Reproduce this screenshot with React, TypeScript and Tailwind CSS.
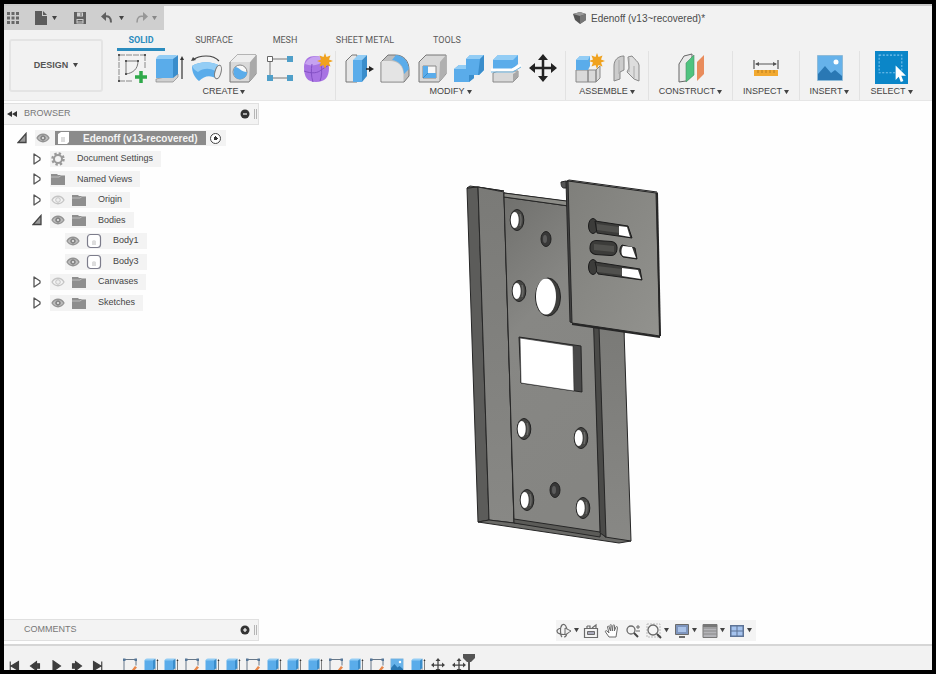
import type { ReactNode } from "react";

const BLUE = "#5aacea";
const PALE = "#93cdf5";
const DEEP = "#3a8dcb";
const LIGHT = "#d9d9d9";
const LINE = "#6b6b6b";

function Svg({ box = "0 0 32 32", className = "size-8", children }: { box?: string; className?: string; children: ReactNode }) {
  return (
    <svg viewBox={box} className={`shrink-0 ${className}`} fill="none" aria-hidden="true">
      {children}
    </svg>
  );
}

function Caret({ className = "w-[5px]" }: { className?: string }) {
  return (
    <svg viewBox="0 0 6 5" className={`shrink-0 ${className}`} aria-hidden="true">
      <path d="M0 0h6L3 5z" fill="#444" />
    </svg>
  );
}

/* ---------- ribbon icons ---------- */

const SketchIcon = ({ className }: { className?: string }) => (
  <Svg className={className}>
    <path d="M3 3h26M3 3v26M29 3v14M3 29h14" stroke="#888" strokeDasharray="6 1" />
    <path d="M10 9h12c0 8-5 12-12 13z" stroke="#777" />
    <path d="M2 2h2v2H2zM28 2h2v2h-2zM2 28h2v2H2zM9 8h2v2H9zM21 8h2v2h-2zM9 21h2v2H9z" fill="#555" />
    <path d="M19 25h12M25 19v12" stroke="#2fa94a" strokeWidth="3.500" />
  </Svg>
);

const ExtrudeIcon = ({ className }: { className?: string }) => (
  <Svg className={className}>
    <path d="M3 27v3h17l5-5v-3z" fill="#d0d0d0" stroke="#888" strokeWidth=".7" />
    <path d="M3 8c0-3 2-5 5-5h16l-4 5z" fill={PALE} />
    <path d="M3 7h17v19H3z" fill={BLUE} />
    <path d="M20 7l5-4v19l-5 4z" fill={DEEP} />
    <path d="M29 7v20" stroke="#333" strokeWidth="1.200" />
    <path d="M27 8l2-4 2 4z" fill="#333" />
  </Svg>
);

const RevolveIcon = () => (
  <Svg>
    <path d="M3 8C9 3 23 2 29 9" stroke="#444" strokeWidth="1.200" />
    <path d="M1 9l2-4 3 3z" fill="#444" />
    <path d="M2 14c8-5 20-5 28 0l-3 13c-6-4-12-4-18 2-5-4-7-9-7-15z" fill={BLUE} />
    <path d="M2 14c8-5 20-5 28 0l-5 5c-5-3-12-3-17 1-2-1-5-3-6-6z" fill={PALE} />
    <ellipse cx="28" cy="20" rx="3" ry="7" transform="rotate(15 28 20)" fill="#eee" stroke="#777" />
  </Svg>
);

const HoleIcon = () => (
  <Svg>
    <path d="M3 10l7-7h19v19l-7 8H3z" fill={LIGHT} stroke="#777" />
    <path d="M23 10l6-7v19l-7 8z" fill="#a9a9a9" />
    <path d="M3 10l7-7h19l-6 7z" fill="#eee" />
    <circle cx="13" cy="20" r="7" fill="#f8f8f8" stroke="#888" />
    <path d="M8 15c4 0 6 5 12 5a7 7 0 0 1-12 5c-2-3-2-7 0-10z" fill={BLUE} />
  </Svg>
);

const PatternIcon = () => (
  <Svg>
    <path d="M6 7h20M6 7v19M6 26h20" stroke="#777" />
    <path d="M3.500 4.500h5v5h-5z" fill="#fff" stroke="#666" />
    <path d="M23 4h6v6h-6zM3 23h6v6H3zM23 23h6v6h-6z" fill="#4f9fc9" />
  </Svg>
);

const FormIcon = () => (
  <Svg>
    <path d="M3 15c0-8 5-11 11-11 9 0 14 4 14 12 0 9-4 14-13 14C6 30 3 25 3 15z" fill="#a873e3" />
    <path d="M4 12c3-8 15-10 20-4-5 5-13 7-20 4z" fill="#c6a2f0" />
    <path d="M3 19c8 3 14 2 17-1l8-5M11 12c-1 6-1 12 1 18M20 12c1 6 1 12-1 17" stroke="#8350c4" />
    <Spark />
  </Svg>
);

const PressPullIcon = () => (
  <Svg>
    <path d="M4 9l6-6h5v27H4z" fill="#e6e6e6" stroke="#777" />
    <path d="M11 8l5-5h9l-5 5z" fill={PALE} />
    <path d="M11 8h9v22h-9z" fill={BLUE} />
    <path d="M20 8l5-5v21l-5 6z" fill={DEEP} />
    <path d="M24 17h5" stroke="#222" strokeWidth="1.500" />
    <path d="M27 14l5 3-5 3z" fill="#222" />
  </Svg>
);

const FilletIcon = () => (
  <Svg>
    <path d="M2 10l7-7h7c9 0 14 6 14 15v6l-5 6H2z" fill="#bdbdbd" stroke="#777" />
    <path d="M11 9H2.500v20.500h22V22C24 14 19 9 11 9z" fill="#e4e4e4" />
    <path d="M13 8l4-5c8 1 12 6 13 14l-5 5c0-8-5-13-12-14z" fill={BLUE} />
  </Svg>
);

const ShellIcon = () => (
  <Svg>
    <path d="M3 10l7-7h20v19l-7 8H3z" fill={LIGHT} stroke="#777" />
    <path d="M24 10l6-7v19l-7 8z" fill="#b0b0b0" />
    <path d="M7 14h13v12H7z" fill="#f7f7f7" stroke="#888" />
    <path d="M7 14h5v7h8v5H7z" fill={BLUE} />
    <path d="M7 26l5-5" stroke={DEEP} />
  </Svg>
);

const CombineIcon = () => (
  <Svg>
    <path d="M1 17l5-4h7V7l4-4h14v15l-5 5h-5v3l-5 4H1z" fill={BLUE} />
    <path d="M13 7l4-4h14l-4 4zM1 17l5-4h7v4z" fill={PALE} />
    <path d="M27 7l4-4v15l-5 5h-1zM21 23v3l-5 4v-7z" fill={DEEP} />
  </Svg>
);

const SplitIcon = () => (
  <Svg>
    <path d="M3 8l5-5h20v9l-5 5H3z" fill={BLUE} />
    <path d="M3 8l5-5h20l-5 5z" fill={PALE} />
    <path d="M3 21l5-2h20v6l-5 5H3z" fill={LIGHT} stroke="#888" />
    <path d="M23 22l5-3v6l-5 5z" fill="#a8a8a8" />
    <path d="M1 18h21l9-5" stroke="#fff" strokeWidth="3" />
    <path d="M1 20h22l8-5" stroke="#6fb6e2" />
  </Svg>
);

const MoveIcon = ({ className, color = "#222" }: { className?: string; color?: string }) => (
  <Svg className={className}>
    <path d="M16 6v20M6 16h20" stroke={color} strokeWidth="2.500" />
    <path d="M16 2l5 6H11zM16 30l5-6H11zM2 16l6-5v10zM30 16l-6-5v10z" fill={color} />
  </Svg>
);

function Spark() {
  return (
    <path d="M24 1l1.500 4 4-1.500L28 7.500l4 1.500-4 1.500 1.500 4-4-1.500L24 17l-1.500-4-4 1.500 1.500-4-4-1.500 4-1.500-1.500-4 4 1.500z" fill="#f0a21e" />
  );
}

const ComponentIcon = () => (
  <Svg>
    <path d="M3 18h12v12H3zM15 18h8v12h-8zM23 18l4-4v12l-4 4z" fill={LIGHT} stroke="#888" />
    <path d="M3 8l4-4h10v10l-2 4H3z" fill={BLUE} />
    <path d="M3 8l4-4h10l-2 4z" fill={PALE} />
    <Spark />
  </Svg>
);

const JointIcon = () => (
  <Svg>
    <path d="M4 14c0-6 4-10 10-10v14l-4 2v7l-6 2z" fill="#ccc" stroke="#888" />
    <path d="M9 8v14" stroke="#aaa" />
    <path d="M18 5l4-1c3 4 6 5 7 9v16l-5-2-7-7 2-4z" fill="#ddd" stroke="#888" />
    <path d="M19 6v14M24 14v12" stroke="#aaa" />
  </Svg>
);

const PlaneIcon = () => (
  <Svg>
    <path d="M4 12l5-8 8-2v22l-6 5-7 1z" fill="#eaeaea" stroke="#666" />
    <path d="M11 11l8-8v20l-8 7z" fill="#4fc37f" stroke="#4a8f66" strokeWidth=".6" />
    <path d="M22 10l7-7v19l-7 7z" fill="#e98c5c" />
  </Svg>
);

const MeasureIcon = () => (
  <Svg>
    <path d="M4 8v9M28 8v9M6 12h20" stroke="#555" strokeWidth="1.200" />
    <path d="M5 12l4-2v4zM27 12l-4-2v4z" fill="#555" />
    <path d="M4 18h24v6H4z" fill="#f2a930" />
    <path d="M8 18v3M12 18v3M16 18v3M20 18v3M24 18v3" stroke="#b87d1c" />
  </Svg>
);

const PictureIcon = ({ className }: { className?: string }) => (
  <Svg className={className}>
    <path d="M3.500 3.500h25v25h-25z" fill="#66b2ea" stroke="#8fbbd8" />
    <circle cx="22" cy="10" r="2.500" fill="#fff" />
    <path d="M4 22l7-8 6 7 4-3 7 6v4H4z" fill="#2a78b4" />
  </Svg>
);

const SelectIcon = () => (
  <Svg className="size-[33px]">
    <path d="M0 0h32v32H0z" fill="#0b86c8" />
    <path d="M4 4h22v17H4z" stroke="#7cc4ee" strokeDasharray="2 1.500" />
    <path d="M20 14v14l3-3 2 5 2.500-1-2-5H30z" fill="#fff" />
  </Svg>
);

type Group = { name: string; width: string; icons: { label: string; icon: ReactNode }[] };

const groups: Group[] = [
  {
    name: "CREATE",
    width: "w-[223px]",
    icons: [
      { label: "Create Sketch", icon: <SketchIcon /> },
      { label: "Extrude", icon: <ExtrudeIcon /> },
      { label: "Revolve", icon: <RevolveIcon /> },
      { label: "Hole", icon: <HoleIcon /> },
      { label: "Pattern", icon: <PatternIcon /> },
      { label: "Create Form", icon: <FormIcon /> },
    ],
  },
  {
    name: "MODIFY",
    width: "w-[230px]",
    icons: [
      { label: "Press Pull", icon: <PressPullIcon /> },
      { label: "Fillet", icon: <FilletIcon /> },
      { label: "Shell", icon: <ShellIcon /> },
      { label: "Combine", icon: <CombineIcon /> },
      { label: "Split Body", icon: <SplitIcon /> },
      { label: "Move", icon: <MoveIcon /> },
    ],
  },
  {
    name: "ASSEMBLE",
    width: "w-[83px]",
    icons: [
      { label: "New Component", icon: <ComponentIcon /> },
      { label: "Joint", icon: <JointIcon /> },
    ],
  },
  { name: "CONSTRUCT", width: "w-[84px]", icons: [{ label: "Offset Plane", icon: <PlaneIcon /> }] },
  { name: "INSPECT", width: "w-[67px]", icons: [{ label: "Measure", icon: <MeasureIcon /> }] },
  { name: "INSERT", width: "w-[60px]", icons: [{ label: "Canvas", icon: <PictureIcon /> }] },
  { name: "SELECT", width: "w-[63px]", icons: [{ label: "Select", icon: <SelectIcon /> }] },
];

const tabs = [
  { name: "SOLID", width: "w-12", active: true },
  { name: "SURFACE", width: "w-[98px]" },
  { name: "MESH", width: "w-11" },
  { name: "SHEET METAL", width: "w-[116px]" },
  { name: "TOOLS", width: "w-12" },
];

function TitleBar() {
  return (
    <header className="flex h-[26px] items-stretch border-t-2 border-[#c9c9c9]">
      <div className="flex w-40 shrink-0 items-center bg-[#cfcfcf] pl-[2px]">
        <button aria-label="Data Panel">
          <Svg box="0 0 14 14" className="size-[14px]">
            <path d="M1 1h3v3H1zM5.500 1h3v3h-3zM10 1h3v3h-3zM1 5.500h3v3H1zM5.500 5.500h3v3h-3zM10 5.500h3v3h-3zM1 10h3v3H1zM5.500 10h3v3h-3zM10 10h3v3h-3z" fill="#686868" />
          </Svg>
        </button>
        <button aria-label="File" className="ml-[14px] flex items-center gap-1">
          <Svg box="0 0 14 14" className="size-[14px]">
            <path d="M1 0h7v5h5v9H1zM9 0l4 4H9z" fill="#5c5c5c" />
          </Svg>
          <Caret />
        </button>
        <button aria-label="Save" className="ml-4">
          <Svg box="0 0 14 14" className="size-[14px]">
            <path d="M1 1h12v12H1z" fill="#606060" />
            <path d="M4 1.500h6v4H4zM3.500 8h7v4.500h-7z" fill="#cfcfcf" />
            <path d="M4.500 9.500h5M4.500 11h5M8 2v3" stroke="#606060" />
          </Svg>
        </button>
        <button aria-label="Undo" className="ml-3 flex items-center gap-1">
          <Svg box="0 0 16 14" className="h-[14px] w-4">
            <path d="M5 5.500c5-1 7 1 7 6" stroke="#606060" strokeWidth="2" />
            <path d="M2 5.500L7 1v9z" fill="#606060" />
          </Svg>
          <Caret />
        </button>
        <button aria-label="Redo" className="ml-[10px] flex items-center gap-[2px] opacity-50">
          <Svg box="0 0 16 14" className="h-[14px] w-4">
            <path d="M10 5.500c-5-1-7 1-7 6" stroke="#606060" strokeWidth="1.500" />
            <path d="M14 5.500L9 1v9z" fill="#606060" />
          </Svg>
          <Caret />
        </button>
      </div>
      <div className="flex flex-1 items-center justify-center gap-1 pl-[182px] text-[10px] text-[#4c4c4c]">
        <Svg box="0 0 14 14" className="size-[14px]">
          <path d="M0 3l7-2 6 2v6l-6 4-5-4z" fill="#555" />
          <path d="M0 3l7-2 6 2-6 2z" fill="#999" />
          <path d="M7 5l6-2v6l-6 4z" fill="#777" />
        </Svg>
        <h1>Edenoff (v13~recovered)*</h1>
      </div>
    </header>
  );
}

function Ribbon() {
  return (
    <div className="flex h-[71px] shrink-0 border-b border-[#e6e6e6] pl-[5px]">
      <button className="mt-[9px] flex h-[53px] w-[94px] shrink-0 items-center justify-center gap-[5px] rounded-[3px] border-2 border-[#e4e4e4] text-[9px] font-bold text-[#555]">
        DESIGN <Caret />
      </button>
      <div className="flex flex-col pl-[10px]">
        <nav className="flex h-[21px] pl-1 font-[Roboto] text-[9px] text-[#5a5a5a]" role="tablist">
          {tabs.map((t) => (
            <button
              key={t.name}
              role="tab"
              aria-selected={!!t.active}
              className={`${t.width} ${t.active ? "border-[#2b8cbe] font-bold text-[#2b8cbe]" : "border-transparent"} whitespace-nowrap border-b-[3px] pt-1`}
            >
              {t.name}
            </button>
          ))}
        </nav>
        <div className="flex flex-1">
          {groups.map((g) => (
            <section key={g.name} className={`${g.width} flex shrink-0 flex-col items-center border-r border-[#e2e2e2] last:border-r-0`}>
              <div className="flex h-[33px] items-center gap-[5px]">
                {g.icons.map((i) => (
                  <button key={i.label} aria-label={i.label}>
                    {i.icon}
                  </button>
                ))}
              </div>
              <button className="flex h-4 items-center gap-[2px] whitespace-nowrap text-[9px] text-[#444]">
                {g.name} <Caret />
              </button>
            </section>
          ))}
        </div>
      </div>
    </div>
  );
}

/* ---------- browser tree ---------- */

const Eye = ({ off = false }: { off?: boolean }) => (
  <Svg box="0 0 16 12" className="h-3 w-4">
    <path d="M2 6c3-5 9-5 12 0-3 5-9 5-12 0z" stroke={off ? "#c4c4c4" : "#929292"} strokeWidth="1.300" fill={off ? "none" : "#bdbdbd"} />
    <circle cx="8" cy="6" r="2.300" fill={off ? "#eee" : "#858585"} stroke={off ? "#c4c4c4" : "#858585"} />
    {!off && <circle cx="8" cy="6" r="1" fill="#eee" />}
  </Svg>
);

const Folder = () => (
  <Svg box="0 0 16 14" className="h-[14px] w-4">
    <path d="M1 2h6l1 1h7v10H1z" fill="#8e8e8e" />
    <path d="M1 5h8l2-1.500h4" stroke="#c9c9c9" strokeWidth=".8" />
  </Svg>
);

const Gear = () => (
  <Svg box="0 0 16 16" className="size-4">
    <circle cx="8" cy="8" r="5.500" stroke="#999" strokeWidth="2.500" strokeDasharray="2.300 2.020" />
    <circle cx="8" cy="8" r="4" stroke="#999" strokeWidth="2" />
  </Svg>
);

const Body = () => (
  <Svg box="0 0 16 16" className="size-4">
    <rect x="1.500" y="1.500" width="13" height="13" rx="3" fill="#fff" stroke="#7d7d8c" strokeWidth="1.200" />
    <path d="M6 8l2-1 2 1v4H6z" fill="#ddd" />
  </Svg>
);

const Doc = () => (
  <Svg box="0 0 16 14" className="h-[14px] w-4">
    <path d="M3 3l3-2h8v10l-2 2H3z" fill="#fff" />
    <path d="M6 6h4v5H6z" fill="#ddd" />
  </Svg>
);

const Expander = ({ open }: { open: boolean }) => (
  <Svg box="0 0 10 12" className="h-3 w-[10px]">
    {open ? (
      <path d="M9 1.500v9H1z" fill="#999" stroke="#444" strokeWidth="1.300" />
    ) : (
      <path d="M2 1l6 4v2l-6 4z" stroke="#555" strokeWidth="1.300" strokeLinejoin="round" />
    )}
  </Svg>
);

type Node = { label: string; indent: string; open?: boolean; leaf?: boolean; eye?: "on" | "off"; icon: ReactNode };

const nodes: Node[] = [
  { label: "Document Settings", indent: "pl-7", icon: <Gear /> },
  { label: "Named Views", indent: "pl-7", icon: <Folder /> },
  { label: "Origin", indent: "pl-7", eye: "off", icon: <Folder /> },
  { label: "Bodies", indent: "pl-7", open: true, eye: "on", icon: <Folder /> },
  { label: "Body1", indent: "pl-[43px]", leaf: true, eye: "on", icon: <Body /> },
  { label: "Body3", indent: "pl-[43px]", leaf: true, eye: "on", icon: <Body /> },
  { label: "Canvases", indent: "pl-7", eye: "off", icon: <Folder /> },
  { label: "Sketches", indent: "pl-7", eye: "on", icon: <Folder /> },
];

function PanelBar({ title, open }: { title: string; open: boolean }) {
  return (
    <div className="flex h-[22px] items-center border border-l-0 border-[#e0e0e0] bg-[#f3f3f3] text-[9px] text-[#777]">
      <div className="w-5 pl-[3px]">
        {open && (
          <Svg box="0 0 10 6" className="h-[6px] w-[10px]">
            <path d="M5 0v6L0 3zM10 0v6L5 3z" fill="#333" />
          </Svg>
        )}
      </div>
      <h2 className="flex-1">{title}</h2>
      <button aria-label={open ? "Collapse" : "Expand"}>
        <Svg box="0 0 10 10" className="size-[10px]">
          <circle cx="5" cy="5" r="4.500" fill="#333" />
          <path d={open ? "M3 5h4" : "M3 5h4M5 3v4"} stroke="#fff" strokeWidth="1.200" />
        </Svg>
      </button>
      <span className="ml-1 mr-[1px] h-[10px] w-[3px] border-x border-[#b5b5b5]" />
    </div>
  );
}

function Browser() {
  return (
    <aside className="flex w-[255px] shrink-0 flex-col pb-[3px] pt-[2px]">
      <PanelBar title="BROWSER" open />
      <ul className="mt-[3px] grid h-[185px] auto-rows-fr text-[9px] text-[#444]">
        <li className="flex items-center gap-2 pl-[13px]">
          <Expander open />
          <div className="flex h-4 items-center bg-[#f3f3f3] pr-[5px]">
            <Eye />
            <button className="ml-1 mr-1 flex h-[14px] items-center gap-3 bg-[#8b8b8b] pr-[9px] text-[10px] font-bold text-[#f4f4f4]">
              <Doc />
              Edenoff (v13-recovered)
            </button>
            <input
              type="radio"
              defaultChecked
              aria-label="Activate Edenoff"
              className="size-[11px] appearance-none rounded-full border border-[#444] bg-[radial-gradient(circle,#333_0_2px,#fff_2px)]"
            />
          </div>
        </li>
        {nodes.map((n) => (
          <li key={n.label} className={`flex items-center gap-2 ${n.indent}`}>
            {n.leaf ? <span className="w-[10px]" /> : <Expander open={!!n.open} />}
            <button className="flex h-4 items-center gap-[5px] bg-[#f3f3f3] pr-2">
              {n.eye && <Eye off={n.eye === "off"} />}
              {n.icon}
              <span className="ml-[6px]">{n.label}</span>
            </button>
          </li>
        ))}
      </ul>
      <div className="mt-auto">
        <PanelBar title="COMMENTS" open={false} />
      </div>
    </aside>
  );
}

/* ---------- model ---------- */

const holes = [
  [517, 220],
  [519, 291],
  [524, 429],
  [581, 438],
  [527, 500],
  [583, 508],
];

const pins = [
  [546, 239],
  [555, 490],
];

function Model() {
  return (
    <svg viewBox="460 175 210 375" className="h-[375px] w-[210px]" role="img" aria-label="Wall plate model">
      <defs>
        <linearGradient id="face" x1="0" y1="0" x2="0.300" y2="1">
          <stop offset="0" stopColor="#70706d" />
          <stop offset="0.400" stopColor="#878784" />
          <stop offset="1" stopColor="#858582" />
        </linearGradient>
        <linearGradient id="flange" x1="0" y1="0" x2="0" y2="1">
          <stop offset="0" stopColor="#7a7a77" />
          <stop offset="1" stopColor="#888885" />
        </linearGradient>
        <linearGradient id="cover" x1="0" y1="0" x2="1" y2="1">
          <stop offset="0" stopColor="#7f7f7b" />
          <stop offset="1" stopColor="#92928e" />
        </linearGradient>
      </defs>
      <g stroke="#262626" strokeLinejoin="round">
        <path d="M467 188l11-1 11 333-11 2z" fill="#5c5c5a" />
        <path d="M467 188l3-2 34 5-26-4z" fill="#8a8a86" />
        <path d="M478 187l26 5 10 331-25-3z" fill="url(#flange)" />
        <path d="M478 522l11-2 25 3 86 10 31 8-12 2z" fill="#6b6b68" />
        <path d="M504 193l120 16v124l-24 204-86-14z" fill="#5b5b58" />
        <path d="M598 326l26 4 7 211-26-4z" fill="url(#flange)" />
        <path d="M593 326l6 1 7 210-6-4z" fill="#4a4a48" />
        <path d="M504 197l86 12 10 323-86-13z" fill="url(#face)" />
        <path d="M504 193l86 11v5l-86-12z" fill="#8c8c87" />
        <path d="M519 337l62 9 1 46-61-9z" fill="#484848" />
        <path d="M520 338l53 8 1 45-53-8z" fill="#fff" strokeWidth=".6" />
      </g>
      <ellipse cx="548" cy="297" rx="12.500" ry="19" fill="#3e3e3c" stroke="#222" />
      <ellipse cx="546" cy="296.500" rx="10" ry="18" fill="#fff" />
      {holes.map(([x, y]) => (
        <g key={`${x}-${y}`}>
          <ellipse cx={x} cy={y} rx="6.800" ry="10.500" fill="#454543" stroke="#222" />
          <path d={`M${x + 3} ${y - 6}q2 6 0 12`} stroke="#6a6a68" strokeWidth="1.500" fill="none" />
          <ellipse cx={x - 2.300} cy={y} rx="4" ry="8" fill="#fff" />
        </g>
      ))}
      {pins.map(([x, y]) => (
        <g key={`${x}-${y}`}>
          <ellipse cx={x} cy={y} rx="5" ry="7.500" fill="#383838" stroke="#222" />
          <ellipse cx={x - 1} cy={y} rx="2" ry="4" fill="#5c5c5c" />
        </g>
      ))}
      <g stroke="#262626" strokeLinejoin="round">
        <path d="M561 182l5-1 3 4v3h-5c-2 0-3-2-3-6z" fill="#555" />
        <path d="M566 181l3 1 4 141-3-1z" fill="#444" />
        <path d="M567 181l2-1 88 12v2z" fill="#aaa" />
        <path d="M568 181l88 12 4 143-88-13z" fill="url(#cover)" />
        <path d="M657 193l3 143" strokeWidth="2" />
        <path d="M572 324l88 13" strokeWidth="2" />
      </g>
      <g fill="#3c3c3a" stroke="#1c1c1c">
        <ellipse cx="593" cy="226" rx="4.500" ry="7.500" />
        <path d="M595 221l33 5 4 12-35-5z" />
        <rect x="590" y="241" width="27" height="14" rx="6" transform="rotate(4 603 248)" />
        <path d="M622 245l13 3 2 11-14-2c-4-3-4-9-1-12z" />
        <ellipse cx="593" cy="267" rx="4.500" ry="7.500" />
        <path d="M595 262l45 7 2 11-44-6z" />
      </g>
      <path d="M597 224l22 3v6l-22-3zM594 244l20 2v6l-20-2zM597 266l25 3v6l-25-3z" fill="#51514e" />
      <path d="M619 226l8 1 3 10-11-2zM623 246l9 1 4 11-13-2c-2-2-2-7 0-10zM622 268l16 2 3 9-19-3z" fill="#fff" />
    </svg>
  );
}

/* ---------- navigation bar ---------- */

const navTools: { label: string; caret?: boolean; icon: ReactNode }[] = [
  {
    label: "Orbit",
    caret: true,
    icon: (
      <>
        <path d="M5 5C1 6 0 8 2 10c3 2 8 2 10 0M6 14c-2-2-2-10 0-12 3-2 5 2 5 6s-1 6-3 6" stroke={LINE} strokeWidth="1.200" />
        <path d="M9 5l6 3-6 4z" fill="#eee" stroke={LINE} />
      </>
    ),
  },
  {
    label: "Look At",
    icon: (
      <>
        <path d="M1.500 5.500h13v9h-13zM4 5.500V3M4 3h3v2M9 5l4-3v3" stroke={LINE} strokeWidth="1.200" />
        <path d="M4.500 8.500h7v3h-7z" fill="#aab" stroke={LINE} />
      </>
    ),
  },
  {
    label: "Pan",
    icon: (
      <path
        d="M5 14L1.500 9c-.500-1 .500-2 1.500-1l2 2-1.500-6c0-1.200 1.300-1.200 1.600 0L6.500 8 6 2.500c0-1.200 1.500-1.200 1.700 0L8.300 8l.7-5.500c.2-1 1.600-1 1.600.2L10.300 8l1.700-4c.5-1 1.700-.5 1.500.5L12 14z"
        fill="#fff"
        stroke={LINE}
      />
    ),
  },
  {
    label: "Zoom",
    icon: (
      <>
        <circle cx="6" cy="7" r="4" stroke={LINE} strokeWidth="1.300" />
        <path d="M9 10l4 4" stroke="#444" strokeWidth="2" />
        <path d="M11 4h4M13 2v4M11 8h4" stroke={LINE} />
      </>
    ),
  },
  {
    label: "Fit",
    caret: true,
    icon: (
      <>
        <path d="M1 1h13v13H1z" stroke="#bbb" strokeDasharray="2 1" />
        <circle cx="7" cy="7" r="5" fill="#f6f6f6" stroke={LINE} strokeWidth="1.300" />
        <path d="M11 11l4 4" stroke="#444" strokeWidth="2" />
      </>
    ),
  },
  {
    label: "Display Settings",
    caret: true,
    icon: (
      <>
        <path d="M1.500 1.500h13v10h-13z" fill="#7e95bd" stroke={LINE} />
        <path d="M4 4h8v5H4z" fill="#a9c2e8" />
        <path d="M5 14h6" stroke={LINE} strokeWidth="2" />
      </>
    ),
  },
  {
    label: "Grid and Snaps",
    caret: true,
    icon: (
      <>
        <path d="M1 1.500h14v13H1z" fill="#b4b4b8" stroke="#777" />
        <path d="M1 5h14M1 8h14M1 11h14" stroke="#888" />
        <path d="M1 3h14" stroke="#777" strokeWidth="2" />
      </>
    ),
  },
  {
    label: "Viewports",
    caret: true,
    icon: (
      <>
        <path d="M1 2h14v12H1z" fill="#5d7396" />
        <path d="M2.500 3.500h5v4h-5zM8.500 3.500h5v4h-5zM2.500 8.500h5v4h-5zM8.500 8.500h5v4h-5z" fill="#a5c3ee" />
      </>
    ),
  },
];

function NavBar() {
  return (
    <div className="flex h-[21px] w-[200px] items-center justify-between bg-[#f4f4f4] pr-[3px]" role="toolbar" aria-label="Navigation">
      {navTools.map((t) => (
        <button key={t.label} aria-label={t.label} className="flex items-center gap-[2px]">
          <Svg box="0 0 16 16" className="size-4">
            {t.icon}
          </Svg>
          {t.caret && <Caret />}
        </button>
      ))}
    </div>
  );
}

/* ---------- timeline ---------- */

const playback = [
  { label: "Start", d: "M3 2v12M14 2v12L4 8z" },
  { label: "Previous", d: "M10 2v12L2 8zM11 5h3v6h-3z" },
  { label: "Play", d: "M4 1v14l10-7z" },
  { label: "Next", d: "M6 2v12l8-6zM2 5h3v6H2z" },
  { label: "End", d: "M13 2v12M2 2v12l10-6z" },
];

const features = "sketch extrude extrude sketch extrude extrude sketch extrude extrude extrude sketch extrude sketch canvas extrude move move".split(" ");

const TimelineSketch = () => (
  <Svg className="size-4">
    <path d="M4 5h24M4 5v22M28 5v12M4 27h14" stroke="#678" strokeWidth="2" />
    <path d="M2 3h5v5H2zM25 3h5v5h-5z" fill="#579" />
    <path d="M18 28l8-10 4 3-8 9z" fill="#e8874a" />
  </Svg>
);

function Feature({ kind }: { kind: string }) {
  if (kind === "sketch") return <TimelineSketch />;
  if (kind === "extrude") return <ExtrudeIcon className="size-4" />;
  if (kind === "canvas") return <PictureIcon className="size-4" />;
  return <MoveIcon className="size-4" color="#444" />;
}

function Timeline() {
  return (
    <footer className="flex h-[26px] shrink-0 overflow-hidden border-t-2 border-[#d6d6d6] bg-[#f2f2f2]">
      <div className="flex items-start gap-[9px] pl-1 pt-[14px]">
        {playback.map((p) => (
          <button key={p.label} aria-label={p.label}>
            <Svg box="0 0 16 16" className="size-3">
              <path d={p.d} fill="#3d3d3d" stroke="#3d3d3d" strokeWidth="1.500" />
            </Svg>
          </button>
        ))}
      </div>
      <div className="ml-4 grid w-[349px] grid-cols-[repeat(17,minmax(0,1fr))] items-start justify-items-center pt-[11px]">
        {features.map((f, i) => (
          <button key={i} aria-label={`${f} ${i + 1}`}>
            <Feature kind={f} />
          </button>
        ))}
      </div>
      <Svg box="0 0 12 20" className="-ml-[6px] mt-2 h-5 w-3">
        <path d="M0 0h12v4L8 8H4L0 4z" fill="#555" />
        <path d="M6 6v14" stroke="#555" strokeWidth="2" />
      </Svg>
    </footer>
  );
}

export default function App() {
  return (
    <div className="flex h-screen flex-col overflow-hidden border-4 border-black bg-[#f2f2f2] font-['Liberation_Sans',Arial,sans-serif]">
      <TitleBar />
      <Ribbon />
      <main className="flex flex-1 bg-[#fefefe]">
        <Browser />
        <div className="flex flex-1 flex-col items-center justify-between pb-[3px] pt-[74px]">
          <div className="pr-[62px]">
            <Model />
          </div>
          <div className="pl-[120px]">
            <NavBar />
          </div>
        </div>
      </main>
      <Timeline />
    </div>
  );
}
